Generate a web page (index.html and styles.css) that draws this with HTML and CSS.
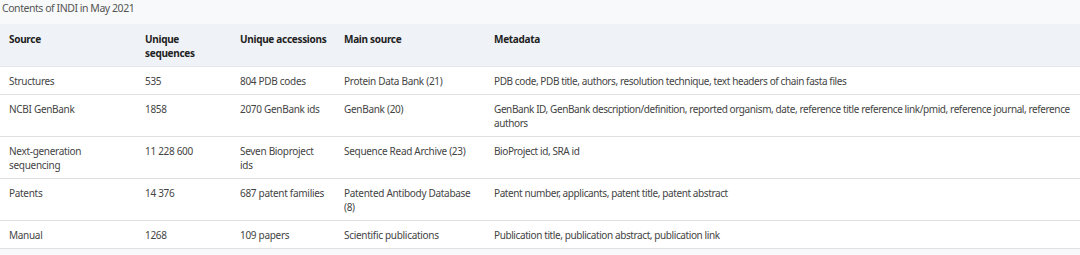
FILE: index.html
```html
<!DOCTYPE html>
<html>
<head>
<meta charset="utf-8">
<link rel="stylesheet" href="styles.css">
</head>
<body>
<div class="caption">Contents of INDI in May 2021</div>
<table class="tbl">
  <colgroup>
    <col class="c1"><col class="c2"><col class="c3"><col class="c4"><col class="c5">
  </colgroup>
  <thead>
    <tr><th>Source</th><th>Unique<br>sequences</th><th>Unique accessions</th><th>Main source</th><th>Metadata</th></tr>
  </thead>
  <tbody>
    <tr><td>Structures</td><td>535</td><td>804 PDB codes</td><td>Protein Data Bank (21)</td><td>PDB code, PDB title, authors, resolution technique, text headers of chain fasta files</td></tr>
    <tr><td>NCBI GenBank</td><td>1858</td><td>2070 GenBank ids</td><td>GenBank (20)</td><td>GenBank ID, GenBank description/definition, reported organism, date, reference title reference link/pmid, reference journal, reference authors</td></tr>
    <tr><td>Next-generation sequencing</td><td>11 228 600</td><td>Seven Bioproject ids</td><td>Sequence Read Archive (23)</td><td>BioProject id, SRA id</td></tr>
    <tr><td>Patents</td><td>14 376</td><td>687 patent families</td><td>Patented Antibody Database (8)</td><td>Patent number, applicants, patent title, patent abstract</td></tr>
    <tr><td>Manual</td><td>1268</td><td>109 papers</td><td>Scientific publications</td><td>Publication title, publication abstract, publication link</td></tr>
  </tbody>
</table>
</body>
</html>
```
FILE: styles.css
```css
html, body {
  margin: 0;
  padding: 0;
  background: #f8f9fa;
}
body {
  font-family: "Noto Sans", "Liberation Sans", sans-serif;
  font-size: 10px;
  letter-spacing: -0.3px;
  color: #444;
  width: 1080px;
  overflow: hidden;
}
.caption {
  font-size: 10.5px;
  letter-spacing: -0.45px;
  color: #555;
  padding: 1px 0 0 2px;
  height: 24px;
  box-sizing: border-box;
}
.tbl {
  width: 1080px;
  border-collapse: collapse;
  table-layout: fixed;
}
.c1 { width: 136px; }
.c2 { width: 95px; }
.c3 { width: 104px; }
.c4 { width: 150px; }
.c5 { width: auto; }
.tbl th {
  background: #eff2f6;
  color: #222;
  font-weight: 700;
  text-align: left;
  vertical-align: top;
  padding: 8px 0 0 9px;
  height: 42px;
  box-sizing: border-box;
  line-height: 14px;
  border-bottom: 1px solid #e2e5e9;
  white-space: nowrap;
}
.tbl td {
  background: #fff;
  vertical-align: top;
  padding: 7px 9px 6px 9px;
  line-height: 14px;
  border-bottom: 1px solid #e0e0e0;
}
.tbl td:last-child {
  letter-spacing: -0.4px;
  padding-right: 0;
}
```
